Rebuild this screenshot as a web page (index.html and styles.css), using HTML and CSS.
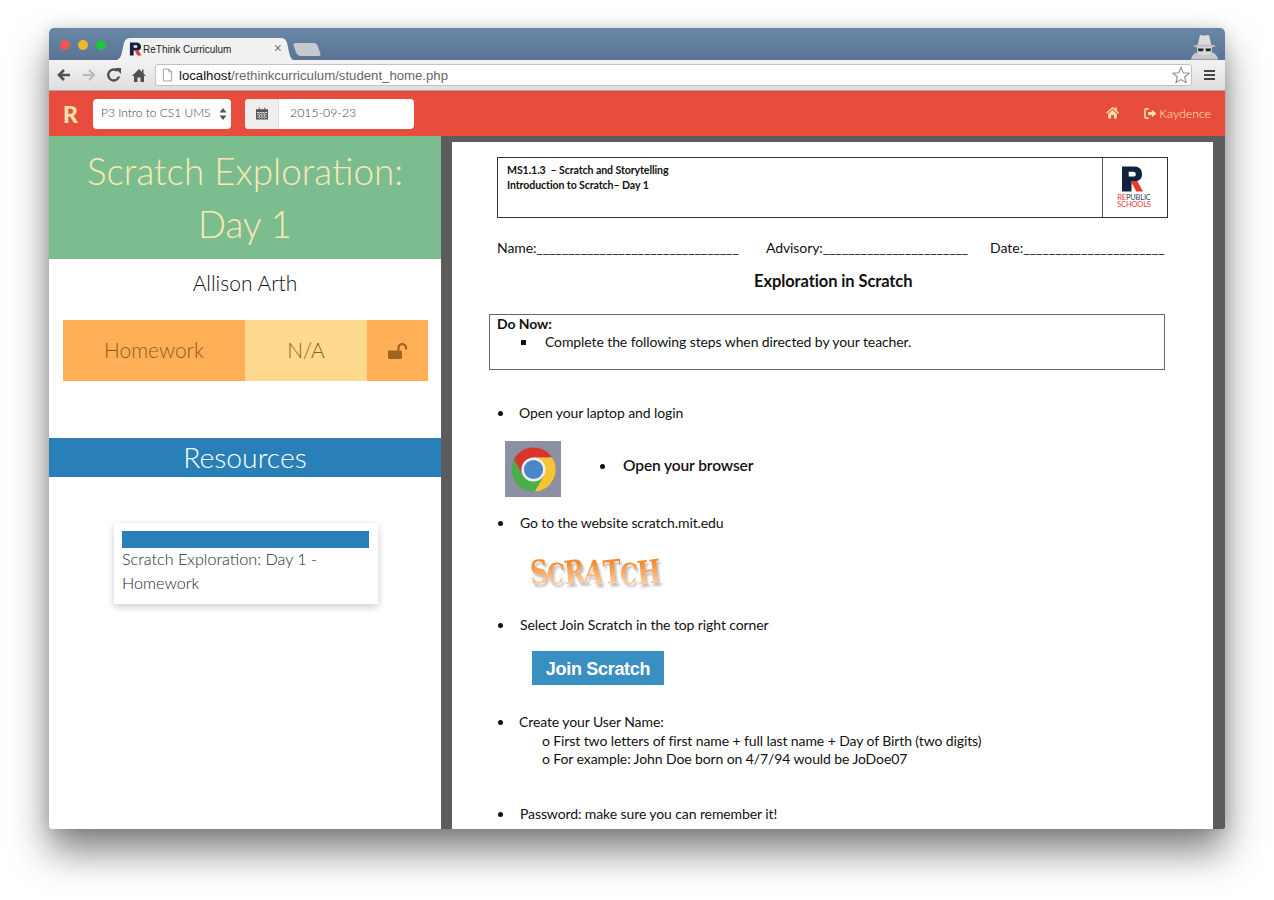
FILE: index.html
```html
<!DOCTYPE html>
<html lang="en">
<head>
<meta charset="utf-8">
<title>ReThink Curriculum</title>
<link rel="stylesheet" href="styles.css">
</head>
<body>
<div class="window">
  <div class="tabstrip">
    <div class="lights"><i class="light red"></i><i class="light yellow"></i><i class="light green"></i></div>
    <div class="tab">
      <svg class="tab-shape" viewBox="0 0 176 23" preserveAspectRatio="none"><path d="M0 23C3 22 4 19 5 15L7 5C8 2 10 0 13 0H164C167 0 169 2 170 5L172 15C173 19 174 22 176 23Z" fill="#f1f1f1"/></svg>
      <svg class="tab-logo" viewBox="0 0 14 14"><path d="M1 0H8C11 0 13 2 13 4.500C13 6.600 12 8 10 8.600L7 8.600H5V14H1Z M5 3V5.700H7.500C8.500 5.700 9 5.200 9 4.300C9 3.500 8.500 3 7.500 3Z" fill="#14213d" fill-rule="evenodd"/><path d="M6 8.300H10L13.500 14H9Z" fill="#e8392f"/></svg>
      <span class="tab-title">ReThink Curriculum</span>
      <span class="tab-close">×</span>
    </div>
    <div class="newtab"></div>
    <svg class="incognito" viewBox="0 0 30 27"><path d="M8 12L10 3C10.500 1 12 1.500 15 2.500C18 1.500 19.500 1 20 3L22 12Z" fill="#dcdcdc"/><path d="M3 13C8 10.500 22 10.500 27 13C24 15 6 15 3 13Z" fill="#c4c4c4"/><path d="M1 27C2 22 5 20 9 19H21C25 20 28 22 29 27Z" fill="#c9c9c9"/><path d="M7 14H23L22 21C19 23 11 23 8 21Z" fill="#d8d8d8"/><path d="M8 15.500H14L13.500 18.500H9Z M16 15.500H22L21 18.500H16.500Z" fill="#222"/></svg>
  </div>
  <div class="toolbar">
    <svg class="tool" viewBox="0 0 16 16"><path d="M14 8H4M8 3L3 8L8 13" fill="none" stroke="#505050" stroke-width="2.600"/></svg>
    <svg class="tool" viewBox="0 0 16 16"><path d="M2 8H12M8 3L13 8L8 13" fill="none" stroke="#b9b9b9" stroke-width="2.200"/></svg>
    <svg class="tool" viewBox="0 0 16 16"><path d="M13 9.500A5.500 5.500 0 1 1 11.500 4" fill="none" stroke="#505050" stroke-width="2.400"/><path d="M9 1H15V7Z" fill="#505050"/></svg>
    <svg class="tool" viewBox="0 0 16 16"><path d="M8 2L1 9H3V15H6.500V10.500H9.500V15H13V9H15L12.500 6.500V2.500H11V5Z" fill="#505050"/></svg>
    <div class="omnibox">
      <svg class="page-icon" viewBox="0 0 12 14"><path d="M1.500 .5H7.500L10.500 3.500V13.500H1.500Z M7.500 .5V3.500H10.500" fill="#fff" stroke="#9a9a9a"/></svg>
      <span class="url"><b>localhost</b>/rethinkcurriculum/student_home.php</span>
      <svg class="star" viewBox="0 0 20 20"><path d="M10 1.500L12.500 7.500L19 8L14 12.200L15.600 18.500L10 15.100L4.400 18.500L6 12.200L1 8L7.500 7.500Z" fill="#fff" stroke="#8e8e8e" stroke-width="1.200"/></svg>
    </div>
    <div class="menu"><i></i><i></i><i></i></div>
  </div>
  <nav class="navbar">
    <span class="brand">R</span>
    <div class="select">P3 Intro to CS1 UMS
      <svg class="updown" viewBox="0 0 8 14"><path d="M4 1L7.500 5.500H.5Z M4 13L.5 8.500H7.500Z" fill="#555"/></svg>
    </div>
    <div class="dategroup">
      <span class="addon"><svg viewBox="0 0 13 13"><path d="M0 2H3V0H4V2H9V0H10V2H13V13H0Z" fill="#555"/><path d="M1 5H12V6H1Z M1 7.500H12V8.300H1Z M1 10H12V10.800H1Z M3.500 5V12H4.300V5Z M6 5V12H6.800V5Z M8.700 5V12H9.500V5Z" fill="#eee"/></svg></span>
      <span class="dateval">2015-09-23</span>
    </div>
    <div class="navright">
      <svg class="nav-home" viewBox="0 0 14 13"><path d="M7 .5L0 6.800L1 7.800L7 2.500L13 7.800L14 6.800L11.500 4.500V1H9.500V2.800Z M2.300 8L7 3.800L11.700 8V13H8.500V9.200H5.500V13H2.300Z" fill="#fde3a7"/></svg>
      <span class="user">
        <svg class="nav-out" viewBox="0 0 14 13"><path d="M5 1.500H2.500C1.500 1.500 1 2 1 3V10C1 11 1.500 11.500 2.500 11.500H5" fill="none" stroke="#fde3a7" stroke-width="1.700"/><path d="M8.500 2.500L13.500 6.500L8.500 10.500V8H4.500V5H8.500Z" fill="#fde3a7"/></svg>
        Kaydence
      </span>
    </div>
  </nav>
  <div class="content">
    <aside class="sidebar">
      <h1 class="lesson">Scratch Exploration: Day&nbsp;1</h1>
      <p class="student">Allison Arth</p>
      <div class="status">
        <div class="st-type">Homework</div>
        <div class="st-val">N/A</div>
        <div class="st-lock"><svg viewBox="0 0 20 16"><path d="M1 7.500H12.500C13.300 7.500 14 8.200 14 9V14.500C14 15.300 13.300 16 12.500 16H1.500C.7 16 0 15.300 0 14.500V8.500C0 8 .5 7.500 1 7.500Z" fill="#a0641e"/><path d="M10.500 7.500V4.500C10.500 2.500 12.200 1.200 14.200 1.200C16.200 1.200 18 2.500 18 4.500V6.500" fill="none" stroke="#a0641e" stroke-width="2.200"/></svg></div>
      </div>
      <h2 class="resources">Resources</h2>
      <div class="card">
        <div class="card-bar"></div>
        <div class="card-text">Scratch Exploration: Day 1 - Homework</div>
      </div>
    </aside>
    <main class="sheet">
      <div class="doc">
        <div class="doc-head">
          <div class="doc-title"><div>MS1.1.3&nbsp; – Scratch and Storytelling</div><div>Introduction to Scratch– Day 1</div></div>
          <div class="doc-logo">
            <svg viewBox="0 0 22 26"><path d="M0 0H13C18 0 21 3 21 8C21 12 19 14 16 15L10 15V26H0Z M7 5.500V10.500H12C13.500 10.500 14.500 9.500 14.500 8C14.500 6.500 13.500 5.500 12 5.500Z" fill="#14213d" fill-rule="evenodd"/><path d="M9 15H16L22 26H15Z" fill="#e8392f"/></svg>
            <span class="rs"><em>RE</em>PUBLIC<br><em>SCHOOLS</em></span>
          </div>
        </div>
        <div class="fields">
          <span class="f1">Name:________________________________</span>
          <span class="f2">Advisory:_______________________</span>
          <span class="f3">Date:______________________</span>
        </div>
        <h3 class="doc-h">Exploration in Scratch</h3>
        <div class="donow">
          <strong>Do Now:</strong>
          <div class="donow-item"><i class="square"></i>Complete the following steps when directed by your teacher.</div>
        </div>
        <div class="step s-laptop"><i class="dot"></i>Open your laptop and login</div>
        <div class="browser-row">
          <div class="chrome-tile">
            <svg viewBox="0 0 44 44"><path d="M5.050 13.430A19 19 0 0 1 37.900 11.600L22 11.600L22 22L13 27.200Z" fill="#d8352e"/><path d="M37.900 11.600A19 19 0 0 1 23.050 40.970L31 27.200L22 22L22 11.600Z" fill="#f6c632"/><path d="M23.050 40.970A19 19 0 0 1 5.050 13.430L13 27.200L22 22L31 27.200Z" fill="#4bae4b"/><circle cx="22" cy="22" r="10.400" fill="#eee"/><circle cx="22" cy="22" r="8.300" fill="#4a86c8"/></svg>
          </div>
          <i class="dot"></i><span class="browser-text">Open your browser</span>
        </div>
        <div class="step s-site"><i class="dot"></i>Go to the website scratch.mit.edu</div>
        <div class="scratch-logo"><span>S</span><span class="small">C</span><span>R</span><span>A</span><span>T</span><span class="small">C</span><span>H</span></div>
        <div class="step s-join"><i class="dot"></i>Select Join Scratch in the top right corner</div>
        <div class="join">Join Scratch</div>
        <div class="step s-user"><i class="dot"></i>Create your User Name:</div>
        <div class="sub sub-first">o First two letters of first name + full last name + Day of Birth (two digits)</div>
        <div class="sub">o For example: John Doe born on 4/7/94 would be JoDoe07</div>
        <div class="step s-pass"><i class="dot"></i>Password: make sure you can remember it!</div>
      </div>
    </main>
  </div>
</div>
</body>
</html>
```
FILE: styles.css
```css
* { box-sizing: border-box; }
html, body { margin: 0; height: 900px; overflow: hidden; background: #fff; }
.window {
  position: relative;
  width: 1176px; height: 801px; margin: 28px 0 0 49px;
  border-radius: 5px 5px 2px 2px; overflow: hidden;
  display: flex; flex-direction: column;
  font-family: Lato, sans-serif;
}
body::before {
  content: ""; position: absolute; left: 49px; top: 28px; width: 1176px; height: 801px;
  box-shadow: 0 22px 38px rgba(0,0,0,.5), 0 0 14px rgba(0,0,0,.12);
  border-radius: 5px;
}

.tabstrip {
  height: 32px; flex: none; display: flex; align-items: flex-end; position: relative;
  background: linear-gradient(#6a87a7, #5a7593);
}
.lights { display: flex; gap: 8px; position: absolute; left: 11px; top: 12px; }
.light { width: 10px; height: 10px; border-radius: 50%; display: block; }
.red { background: #f2544e; } .yellow { background: #f5b52e; } .green { background: #1ec63f; }
.tab {
  position: relative; margin-left: 68px; width: 176px; height: 22px;
  display: flex; align-items: center; padding-left: 12px;
}
.tab-shape { position: absolute; inset: 0; width: 100%; height: 100%; }
.tab-logo { position: relative; width: 13px; height: 14px; margin-right: 1px; }
.tab-title { position: relative; font: 10px "Liberation Sans", sans-serif; color: #222; }
.tab-close { position: absolute; right: 11px; top: 2px; font: 14px "Liberation Sans", sans-serif; color: #777; }
.newtab {
  width: 24px; height: 13px; margin: 0 0 4px 2px;
  background: #c6c9cd; border-radius: 3px 3px 3px 4px; transform: skewX(20deg);
}
.incognito { position: absolute; right: 6px; top: 5px; width: 29px; height: 27px; }

.toolbar {
  height: 31px; flex: none; display: flex; align-items: center; padding-left: 7px;
  background: linear-gradient(#f3f3f3, #dedede); border-bottom: 1px solid #a8a8a8;
}
.tool { width: 16px; height: 16px; margin-right: 9px; flex: none; }
.omnibox {
  flex: none; width: 1037px; height: 22px; margin-left: -1px; background: #fff;
  border: 1px solid #c2c2c2; border-radius: 3px; display: flex; align-items: center; padding-left: 6px;
}
.page-icon { width: 11px; height: 14px; margin-right: 6px; }
.url { font: 13.200px "Liberation Sans", sans-serif; color: #666; flex: 1; }
.url b { font-weight: 400; color: #111; }
.star { width: 18px; height: 18px; margin-right: 1px; }
.menu { margin-left: 12px; width: 11px; display: flex; flex-direction: column; gap: 2px; }
.menu i { display: block; height: 2px; background: #444; }

.navbar {
  height: 45px; flex: none; background: #e74c3c; display: flex; align-items: center; padding-left: 14px;
  color: #fde3a7;
}
.brand { font: 900 23px Lato, sans-serif; width: 30px; color: #fde3a7; }
.select {
  width: 138px; height: 30px; background: #fff; border-radius: 4px; margin-right: 14px;
  display: flex; align-items: center; padding: 0 0 2px 8px; position: relative;
  font-size: 12px; font-weight: 300; color: #444; white-space: nowrap;
}
.updown { position: absolute; right: 4px; top: 8px; width: 8px; height: 14px; }
.dategroup { display: flex; width: 169px; height: 30px; border-radius: 4px; overflow: hidden; background: #fff; }
.addon { width: 34px; background: #eee; border-right: 1px solid #ddd; display: flex; align-items: center; justify-content: center; }
.addon svg { width: 12px; height: 13px; }
.dateval { padding: 0 0 2px 11px; font-size: 12.300px; font-weight: 300; color: #444; align-self: center; }
.navright { margin-left: auto; display: flex; align-items: center; padding-right: 14px; }
.nav-home { width: 13px; height: 13px; margin-right: 25px; margin-top: -3px; }
.user { font-size: 12.300px; font-weight: 300; display: flex; align-items: center; gap: 2px; color: #ffeec2; }
.nav-out { width: 13px; height: 13px; }

.content { flex: 1; min-height: 0; display: flex; background: #5c5c5c; }
.sidebar { width: 392px; flex: none; background: #fff; display: flex; flex-direction: column; }
.lesson {
  margin: 0; height: 123px; background: #7bbd8f; color: #fbe9b5;
  font-size: 36.800px; font-weight: 300; line-height: 53px; text-align: center; padding: 9px 20px 0;
}
.student { margin: 11px 0 0; height: 50px; line-height: 26px; font-size: 21px; font-weight: 300; text-align: center; color: #111; }
.status { display: flex; margin-left: 14px; width: 365px; height: 61px; font-size: 21px; font-weight: 300; color: #955a18; }
.status > div { display: flex; align-items: center; justify-content: center; }
.st-type { width: 182px; background: #ffb056; padding-bottom: 2px; }
.st-val { width: 122px; background: #fed990; padding-bottom: 2px; }
.st-lock { width: 61px; background: #ffb056; }
.st-lock svg { width: 20px; height: 16px; }
.resources {
  margin: 57px 0 0; height: 39px; background: #2980b9; color: #fff; text-align: center;
  font-size: 28.300px; font-weight: 300; line-height: 39px;
}
.card {
  margin: 46px 0 0 65px; width: 264px; height: 81px; background: #fff; padding: 8px 9px 0 8px;
  box-shadow: 0 3px 8px rgba(0,0,0,.2);
}
.card-bar { height: 17px; background: #2980b9; width: 247px; margin-bottom: -1px; }
.card-text { font-size: 16.200px; font-weight: 300; line-height: 24px; color: #1d2a3a; }

.sheet { margin: 6px 12px 0 11px; flex: 1; min-width: 0; background: #fff; overflow: hidden; }
.doc { padding: 15px 0 0 45px; font: 14px Lato, sans-serif; color: #111; position: relative; letter-spacing: -.1px; }
.doc-head { width: 671px; height: 61px; border: 1px solid #333; display: flex; }
.doc-title { flex: 1; padding: 5px 9px; font-size: 10.600px; font-weight: 700; line-height: 15px; }
.doc-logo { width: 65px; border-left: 1px solid #555; display: flex; flex-direction: column; align-items: center; padding: 8px 2px 0 0; }
.doc-logo svg { width: 21px; height: 26px; margin-right: 3px; }
.rs { font-size: 7.500px; line-height: 6.500px; color: #35435c; text-align: center; margin-top: 3px; letter-spacing: -.2px; }
.rs em { font-style: normal; color: #e8392f; }
.fields { display: flex; margin-top: 21px; height: 18px; line-height: 18px; white-space: nowrap; }
.f1 { width: 269px; } .f2 { width: 224px; }
.f3 { letter-spacing: 0; }
.doc-h { margin: 14px 0 0 257px; font-size: 16.500px; line-height: 20px; font-weight: 700; }
.donow { margin: 23px 0 0 -8px; width: 676px; height: 56px; border: 1px solid #666; padding: 1px 0 0 7px; line-height: 16px; }
.donow-item { display: flex; align-items: center; margin-top: 1px; line-height: 18px; }
.square { width: 5px; height: 5px; background: #111; margin: 0 19px 0 24px; flex: none; }
.dot { width: 5px; height: 5px; border-radius: 50%; background: #111; display: inline-block; flex: none; }
.step { display: flex; align-items: center; line-height: 18px; height: 18px; }
.step .dot { margin: 0 16px 0 1px; }
.s-laptop { margin-top: 34px; }
.browser-row { display: flex; align-items: center; margin: 19px 0 0 8px; height: 56px; }
.chrome-tile { width: 56px; height: 56px; background: #8d8fa2; display: flex; align-items: center; justify-content: center; margin-right: 39px; }
.chrome-tile svg { width: 51px; height: 51px; }
.browser-row .dot { margin: -6px 18px 0 0; }
.browser-text { font-size: 15.500px; font-weight: 600; margin-top: -8px; }
.s-site { margin-top: 17px; }
.s-site .dot { margin-right: 17px; }
.scratch-logo {
  margin: 21px 0 0 33px; height: 40px; display: flex; white-space: nowrap;
  font: 700 25px/40px "DejaVu Serif", serif; letter-spacing: -.8px;
  filter: drop-shadow(2px 3px 1px #bbb);
}
.scratch-logo span {
  display: block; transform: scaleY(1.3);
  background: linear-gradient(#f58b2e 30%, #ffd7ae 75%);
  -webkit-background-clip: text; background-clip: text; color: transparent;
}
.scratch-logo span:nth-child(odd) { transform: scaleY(1.3) rotate(-5deg); }
.scratch-logo span:nth-child(even) { transform: scaleY(1.3) rotate(5deg); }
.scratch-logo .small { font-size: 22px; }
.s-join { margin-top: 23px; }
.s-join .dot { margin-right: 17px; }
.join {
  margin: 17px 0 0 35px; width: 132px; height: 34px; background: #3a8fc2; color: #fff;
  font: 700 18px/36px "Liberation Sans", sans-serif; text-align: center; letter-spacing: -.3px;
}
.s-user { margin-top: 28px; }
.sub { margin-left: 45px; line-height: 18px; }
.sub-first { margin-top: 1px; }
.s-pass { margin-top: 37px; }
.s-pass .dot { margin-right: 17px; }
```
